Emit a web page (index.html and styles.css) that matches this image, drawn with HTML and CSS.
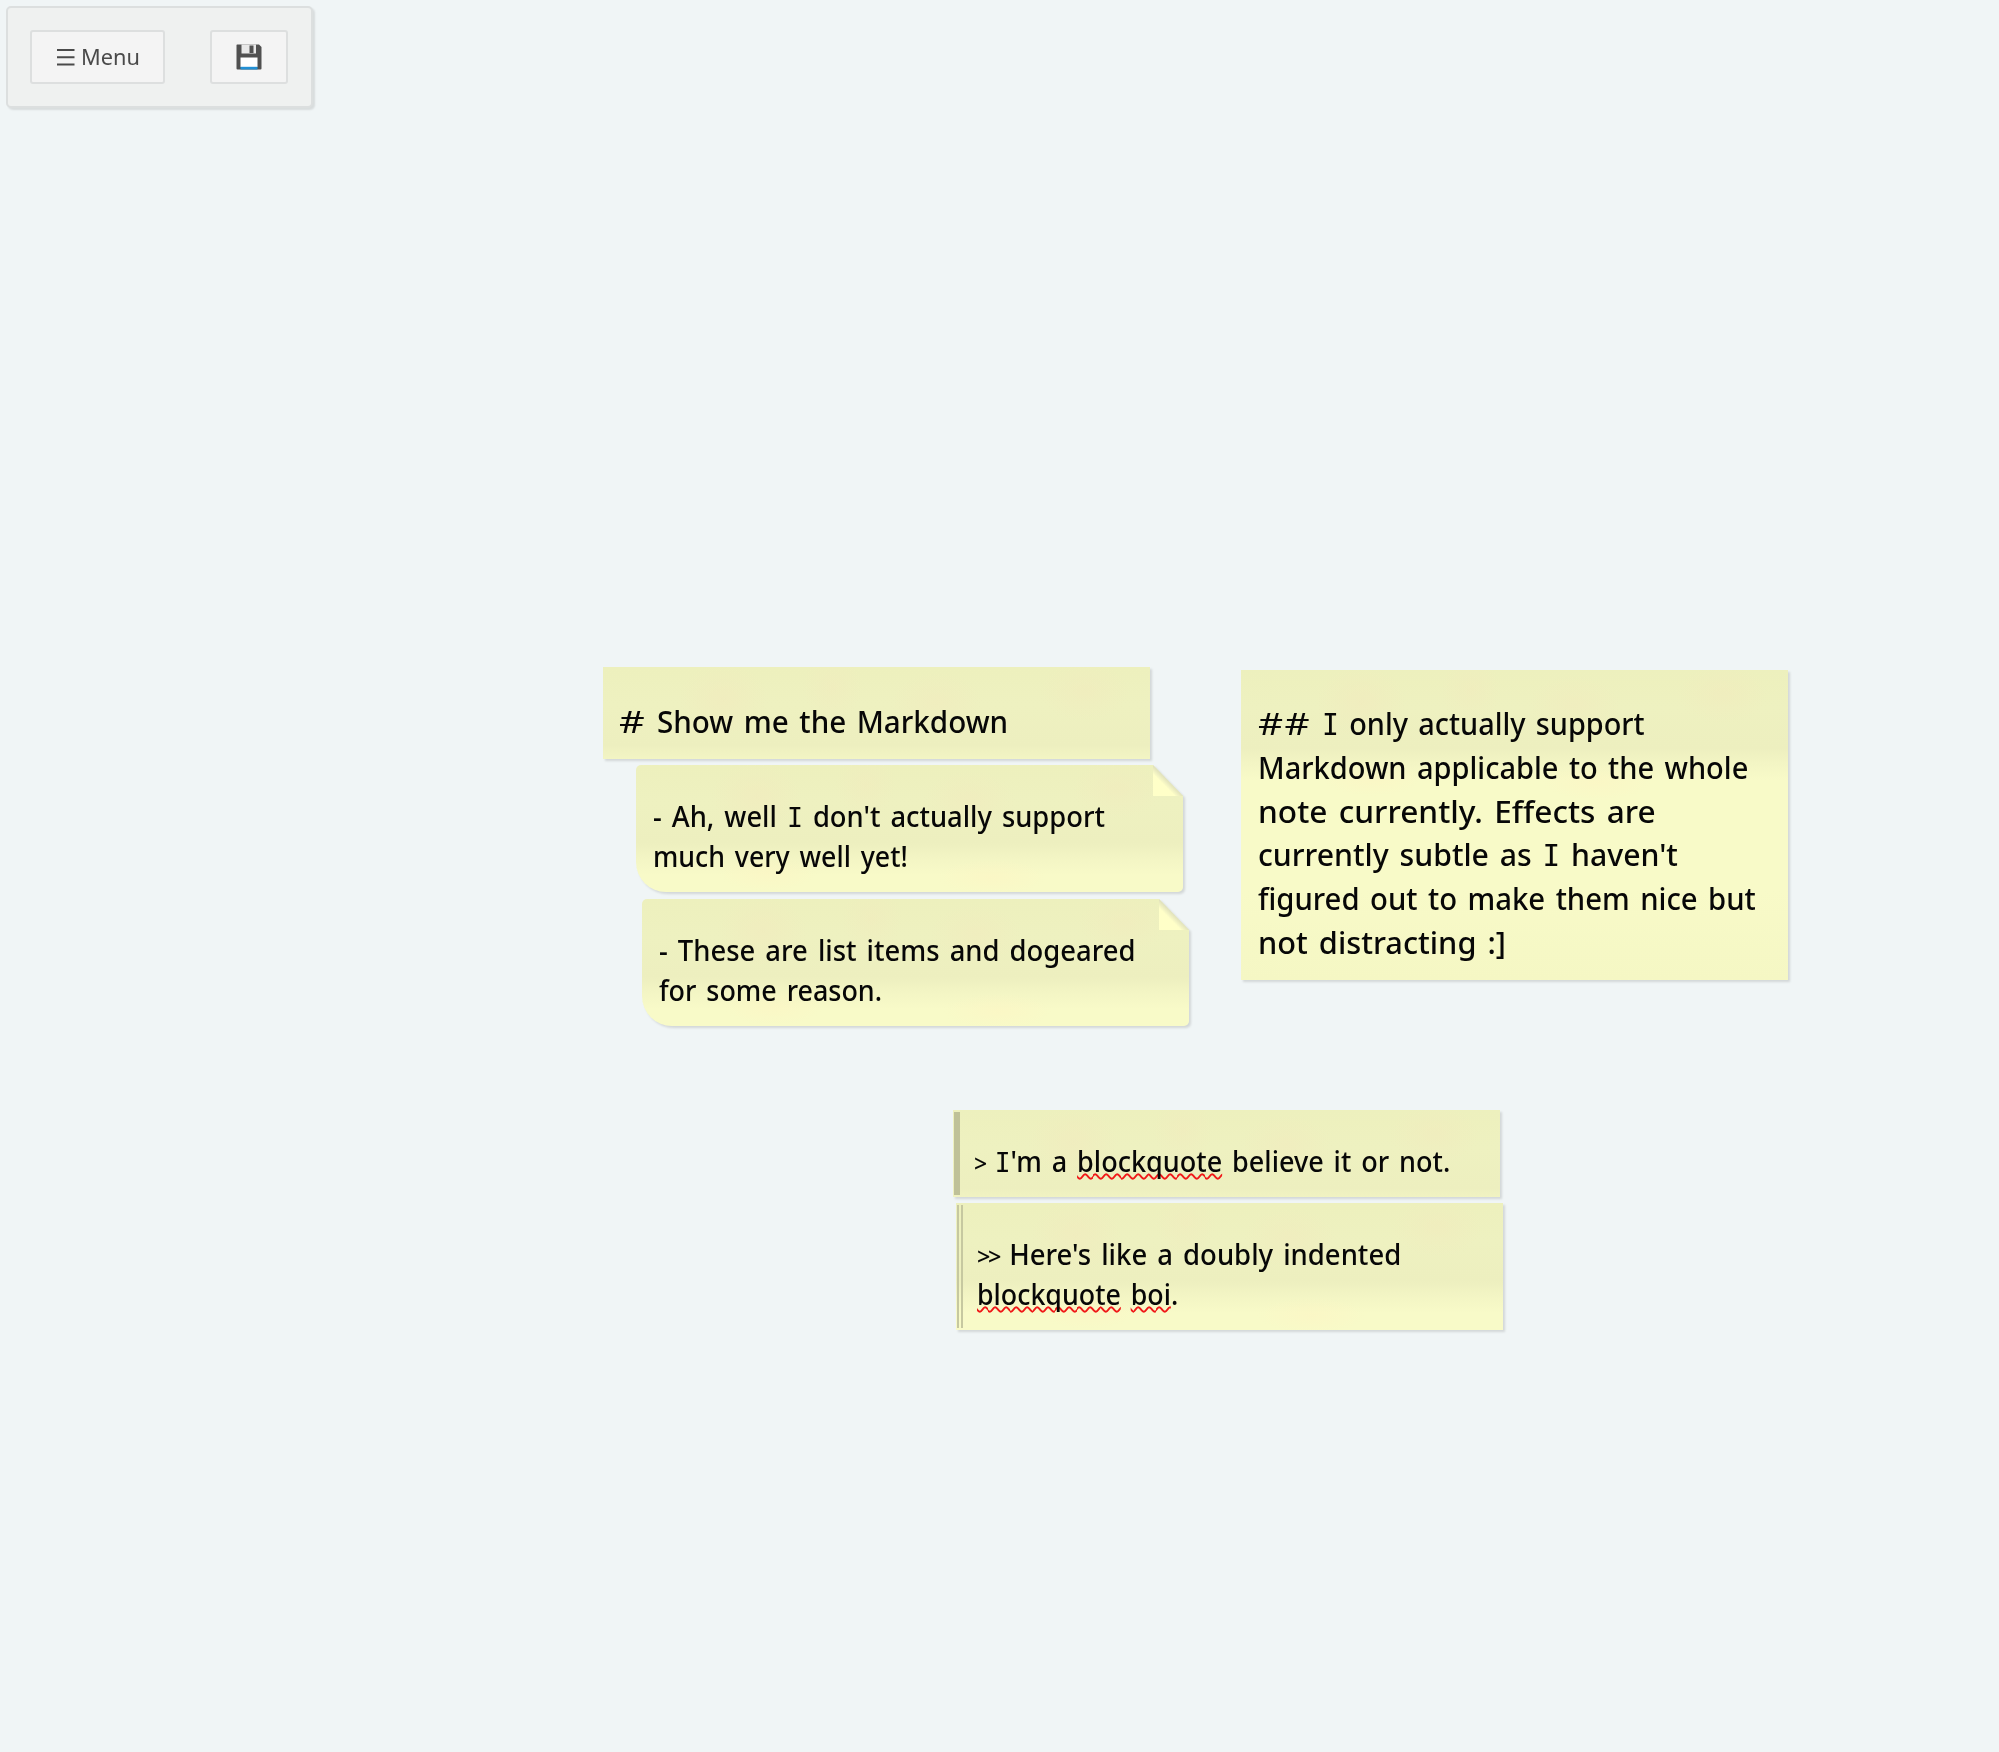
FILE: index.html
```html
<!DOCTYPE html>
<html lang="en">
<head>
<meta charset="utf-8">
<title>Notes</title>
<link rel="stylesheet" href="styles.css">
</head>
<body>
<nav class="toolbar">
  <button class="button button-menu"><svg class="bars" viewBox="0 0 18 18"><path d="M0 2h17.500M0 9.300h17.500M0 16.500h17.500"/></svg><span class="menu-label"><span class="line" data-width="59">Menu</span></span></button>
  <button class="button button-save" aria-label="Save">
    <svg class="disk" viewBox="0 0 26 26">
      <path class="disk-body" d="M1 .5h22l2.500 2.500v21.500a1 1 0 0 1-1 1H1.500a1 1 0 0 1-1-1V1z"/>
      <path class="disk-shutter" d="M5.500.5h14.500v9H5.500z"/>
      <path class="disk-slot" d="M13.500 1.500h4v7.500h-4z"/>
      <path class="disk-label" d="M4.500 13.500h17v9.500h-17z"/>
      <path class="disk-stripe" d="M4.500 22.800h17v2.700h-17z"/>
    </svg>
  </button>
</nav>
<main class="canvas">
  <article class="note note-title"><div class="paper"></div><div class="text"><span class="line" data-width="389"><b>#</b> Show me the Markdown</span></div></article>
  <article class="note note-item item-first"><div class="paper"></div><div class="text"><span class="line" data-width="452">- Ah, well <i>I</i> don't actually support</span><span class="line" data-width="255">much very well yet!</span></div></article>
  <article class="note note-item item-second"><div class="paper"></div><div class="text"><span class="line" data-width="477">- These are list items and dogeared</span><span class="line" data-width="223">for some reason.</span></div></article>
  <article class="note note-subtitle"><div class="paper"></div><div class="text"><span class="line" data-width="387"><b>#</b><b>#</b> <i>I</i> only actually support</span><span class="line" data-width="490">Markdown applicable to the whole</span><span class="line" data-width="398">note currently. Effects are</span><span class="line" data-width="420">currently subtle as <i>I</i> haven't</span><span class="line" data-width="498">figured out to make them nice but</span><span class="line" data-width="248">not distracting :]</span></div></article>
  <article class="note note-quote"><div class="paper"></div><div class="text"><span class="line" data-width="476"><s>&gt;</s> <i>I</i>'m a <u>blockquote</u> believe it or not.</span></div></article>
  <article class="note note-quote note-quote-double"><div class="paper"></div><div class="text"><span class="line" data-width="424"><s>&gt;&gt;</s> Here's like a doubly indented</span><span class="line" data-width="201"><u>blockquote</u> <u>boi</u>.</span></div></article>
</main>
<script src="script.js"></script>
</body>
</html>
```
FILE: styles.css
```css
* { box-sizing: border-box; }
body {
  margin: 0;
  height: 1752px;
  overflow: hidden;
  background: #f0f5f6;
  font-family: "Noto Sans", sans-serif;
}
.toolbar {
  display: flex;
  justify-content: space-between;
  width: 307px;
  height: 102px;
  margin: 6px 0 0 6px;
  padding: 22px 23px 22px 22px;
  border: 2px solid #dcdfdf;
  border-radius: 5px;
  background: #eff1f0;
  box-shadow: 2px 2px 2px rgba(0, 0, 0, .1);
}
.button {
  display: flex;
  align-items: center;
  height: 54px;
  margin: 0;
  padding: 0;
  border: 2px solid #dddfdf;
  border-radius: 3px;
  background: #f4f4f4;
  color: #4a4a4a;
  font: 22.500px/50px "Noto Sans", sans-serif;
}
.button-menu { width: 135px; padding-left: 25px; }
.button-save { width: 78px; justify-content: center; }
.bars { width: 18px; height: 18px; margin-right: 6px; stroke: #4a4a4a; stroke-width: 2; }
.menu-label { width: 60px; }
.disk { width: 26px; height: 26px; }
.disk-body { fill: #505050; }
.disk-shutter { fill: #e8e8e8; }
.disk-slot { fill: #505050; }
.disk-label { fill: #fff; }
.disk-stripe { fill: #2290d5; }

.canvas { position: absolute; inset: 0; pointer-events: none; }
.note {
  position: absolute;
  width: 547px;
  color: #070707;
  font-size: 28px;
  font-weight: 500;
  line-height: 40px;
  filter: drop-shadow(2px 2px 1px rgba(0, 0, 0, .12));
}
.paper {
  position: absolute;
  inset: 0;
  background:
    radial-gradient(ellipse 45px 36px at 22% 32px, #f2eabd90, #f2eabd00),
    radial-gradient(ellipse 30px 34px at 42% 20px, #f2eabd70, #f2eabd00),
    radial-gradient(ellipse 46px 30px at 61% 35px, #f2eabd80, #f2eabd00),
    radial-gradient(ellipse 45px 30px at 88% 24px, #f2eabd80, #f2eabd00),
    radial-gradient(ellipse 50px 18px at 24% 108px, #fdf4c380, #fdf4c300),
    radial-gradient(ellipse 55px 18px at 65% 112px, #fdf4c380, #fdf4c300),
    linear-gradient(#edf0bd 0, #eef1c0 38px, #edefbf 78px, #f3f5c4 93px, #f8fac8 110px, #f8fac8 220px, #f5f7c4 100%);
}
.text { position: relative; padding: 41px 0 0 16px; }
.line {
  display: block;
  width: max-content;
  white-space: pre;
  word-spacing: 3px;
  transform-origin: 0 50%;
}
.line i, .line b, .line s { font-style: normal; font-weight: inherit; line-height: 0; text-decoration: none; }
.line i { font-family: "DejaVu Sans Mono", monospace; font-size: .97em; }
.line b { display: inline-block; width: .93em; font-weight: 400; transform: scaleX(1.35); transform-origin: 0 50%; }
.line s { display: inline-block; letter-spacing: -.1em; font-size: .85em; }
.line u { text-decoration: underline wavy #f01818 1.500px; text-underline-offset: 1px; text-decoration-skip-ink: none; }

.note-title { left: 602.500px; top: 667px; height: 92px; font-size: 31.500px; line-height: 44px; }
.note-title .text { padding-top: 32px; }
.note-item { height: 127px; }
.item-first { left: 636px; top: 765px; }
.item-second { left: 642px; top: 899px; }
.note-item .text { padding: 31px 0 0 17px; }
.note-item .paper {
  border-radius: 5px 0 5px 30px;
  clip-path: polygon(0 0, calc(100% - 30px) 0, 100% 31px, 100% 100%, 0 100%);
}
.note-item .paper::after {
  content: "";
  position: absolute;
  top: 0;
  right: 0;
  width: 30px;
  height: 31px;
  background: linear-gradient(45deg, #ffffc8 36%, #e0e1bc 50%);
}
.note-subtitle { left: 1241px; top: 670px; height: 310px; font-size: 30.500px; line-height: 43.800px; }
.note-subtitle .text { padding: 32px 0 0 17px; }
.note-quote { left: 953px; top: 1110px; height: 87px; }
.note-quote .text { padding: 31px 0 0 21px; }
.note-quote .paper::before {
  content: "";
  position: absolute;
  box-sizing: border-box;
  left: 1px;
  top: 2px;
  bottom: 2px;
  width: 6px;
  background: #bfc198;
}
.note-quote-double { left: 956px; top: 1203px; height: 127px; }
.note-quote-double .paper::before {
  background: none;
  border: solid #c6c8a0;
  border-width: 0 2px;
}
```
FILE: script.js
```js
// Condense each line of text to its measured width.
document.querySelectorAll(".line").forEach(function (line) {
  line.style.transform = "scaleX(" + Number(line.dataset.width) / line.offsetWidth + ")";
});
```
